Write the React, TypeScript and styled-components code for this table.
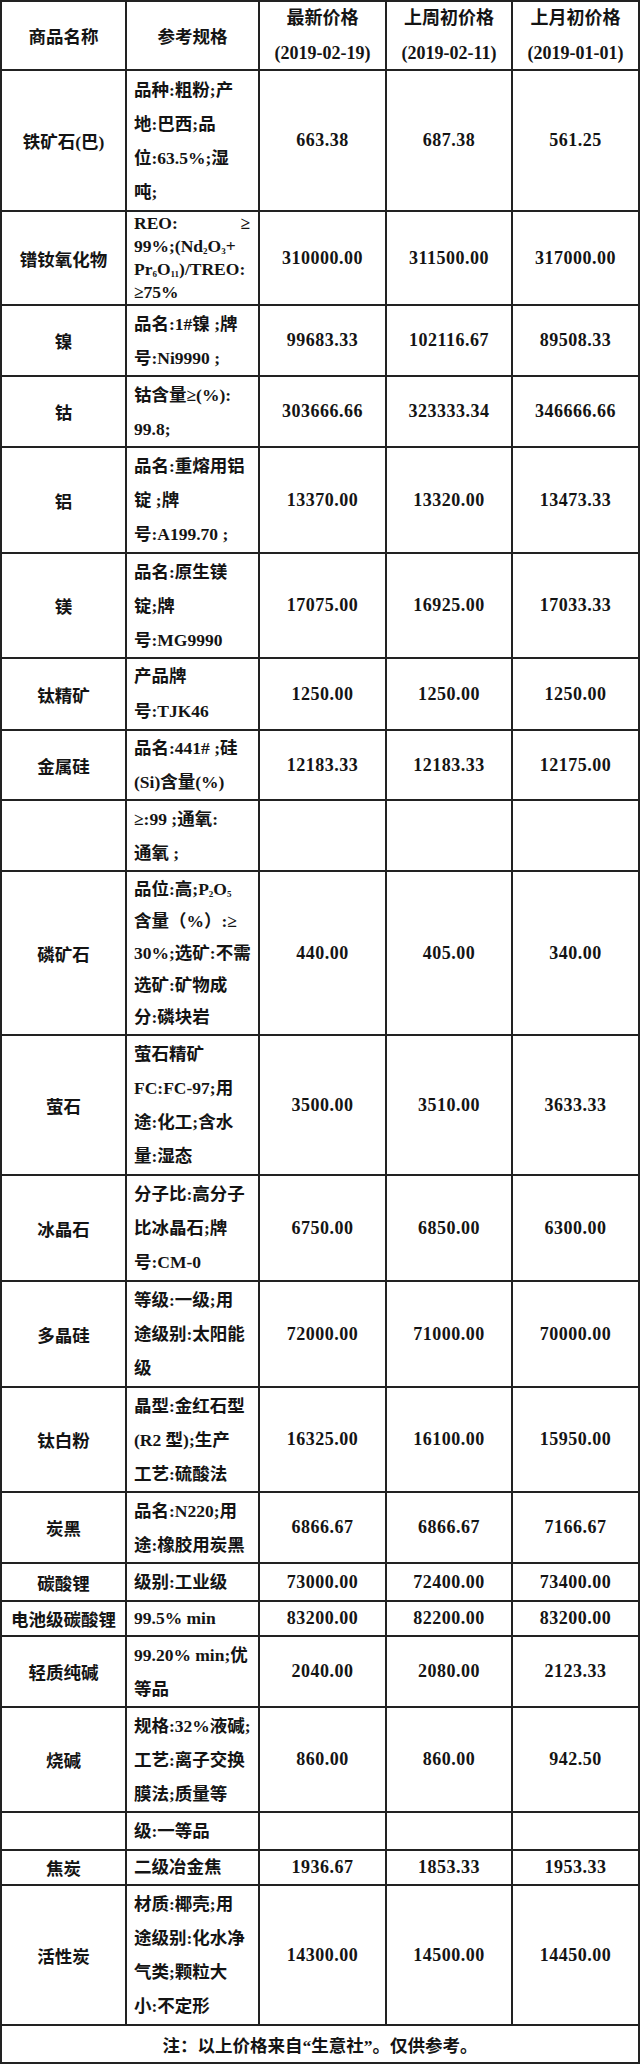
import React from "react";
import styled, { createGlobalStyle } from "styled-components";

const GlobalStyle = createGlobalStyle`
  html, body {
    margin: 0;
    padding: 0;
    background: #ffffff;
  }
  body {
    font-family: "Liberation Serif", "Noto Sans CJK SC", serif;
    color: #141414;
  }
`;

const Table = styled.div`
  width: 640px;
  box-sizing: border-box;
  border-top: 2px solid #222;
  border-left: 2px solid #222;
  font-size: 17.5px;
  font-weight: 600;
`;

const Row = styled.div<{ $height: number }>`
  display: grid;
  grid-template-columns: 125px 133px 127px 126px 127px;
  height: ${(props) => props.$height}px;
  box-sizing: border-box;
  border-bottom: 2px solid #222;
`;

const Cell = styled.div`
  display: flex;
  align-items: center;
  justify-content: center;
  border-right: 2px solid #222;
  white-space: nowrap;
  overflow: hidden;
`;

const HeadCell = styled(Cell)`
  flex-direction: column;
  line-height: 35px;
  font-size: 18px;
`;

const PriceCell = styled(Cell)`
  font-size: 18px;
  letter-spacing: 0.5px;
`;

const SpecCell = styled.div<{ $lineHeight: number }>`
  display: flex;
  flex-direction: column;
  justify-content: center;
  padding: 0 8px 0 7px;
  border-right: 2px solid #222;
  line-height: ${(props) => props.$lineHeight}px;
  white-space: nowrap;
  overflow: hidden;

  sub {
    font-size: 9px;
    line-height: 0;
    vertical-align: -2px;
  }
`;

const SpecLine = styled.div``;

const Spread = styled.span`
  display: flex;
  justify-content: space-between;
`;

const NoteRow = styled.div`
  display: flex;
  align-items: center;
  justify-content: center;
  height: 38px;
  box-sizing: border-box;
  border-right: 2px solid #222;
  border-bottom: 2px solid #222;
`;

interface IPriceRow {
  name: string;
  spec: React.ReactNode[];
  prices: string[];
  height: number;
}

const EMPTY = ["", "", ""];

const rows: IPriceRow[] = [
  {
    name: "铁矿石(巴)",
    spec: ["品种:粗粉;产", "地:巴西;品", "位:63.5%;湿", "吨;"],
    prices: ["663.38", "687.38", "561.25"],
    height: 141,
  },
  {
    name: "镨钕氧化物",
    spec: [
      <Spread key="a">
        <span>REO:</span>
        <span>≥</span>
      </Spread>,
      <span key="b">
        99%;(Nd<sub>2</sub>O<sub>3</sub>+
      </span>,
      <span key="c">
        Pr<sub>6</sub>O<sub>11</sub>)/TREO:
      </span>,
      "≥75%",
    ],
    prices: ["310000.00", "311500.00", "317000.00"],
    height: 94,
  },
  {
    name: "镍",
    spec: ["品名:1#镍 ;牌", "号:Ni9990 ;"],
    prices: ["99683.33", "102116.67", "89508.33"],
    height: 71,
  },
  {
    name: "钴",
    spec: ["钴含量≥(%):", "99.8;"],
    prices: ["303666.66", "323333.34", "346666.66"],
    height: 71,
  },
  {
    name: "铝",
    spec: ["品名:重熔用铝", "锭 ;牌", "号:A199.70 ;"],
    prices: ["13370.00", "13320.00", "13473.33"],
    height: 106,
  },
  {
    name: "镁",
    spec: ["品名:原生镁", "锭;牌", "号:MG9990"],
    prices: ["17075.00", "16925.00", "17033.33"],
    height: 105,
  },
  {
    name: "钛精矿",
    spec: ["产品牌", "号:TJK46"],
    prices: ["1250.00", "1250.00", "1250.00"],
    height: 72,
  },
  {
    name: "金属硅",
    spec: ["品名:441# ;硅", "(Si)含量(%)"],
    prices: ["12183.33", "12183.33", "12175.00"],
    height: 70,
  },
  {
    name: "",
    spec: ["≥:99 ;通氧:", "通氧 ;"],
    prices: EMPTY,
    height: 71,
  },
  {
    name: "磷矿石",
    spec: [
      <span key="a">
        品位:高;P<sub>2</sub>O<sub>5</sub>
      </span>,
      "含量（%）:≥",
      "30%;选矿:不需",
      "选矿:矿物成",
      "分:磷块岩",
    ],
    prices: ["440.00", "405.00", "340.00"],
    height: 164,
  },
  {
    name: "萤石",
    spec: ["萤石精矿", "FC:FC-97;用", "途:化工;含水", "量:湿态"],
    prices: ["3500.00", "3510.00", "3633.33"],
    height: 140,
  },
  {
    name: "冰晶石",
    spec: ["分子比:高分子", "比冰晶石;牌", "号:CM-0"],
    prices: ["6750.00", "6850.00", "6300.00"],
    height: 106,
  },
  {
    name: "多晶硅",
    spec: ["等级:一级;用", "途级别:太阳能", "级"],
    prices: ["72000.00", "71000.00", "70000.00"],
    height: 106,
  },
  {
    name: "钛白粉",
    spec: ["晶型:金红石型", "(R2 型);生产", "工艺:硫酸法"],
    prices: ["16325.00", "16100.00", "15950.00"],
    height: 105,
  },
  {
    name: "炭黑",
    spec: ["品名:N220;用", "途:橡胶用炭黑"],
    prices: ["6866.67", "6866.67", "7166.67"],
    height: 71,
  },
  {
    name: "碳酸锂",
    spec: ["级别:工业级"],
    prices: ["73000.00", "72400.00", "73400.00"],
    height: 38,
  },
  {
    name: "电池级碳酸锂",
    spec: ["99.5% min"],
    prices: ["83200.00", "82200.00", "83200.00"],
    height: 35,
  },
  {
    name: "轻质纯碱",
    spec: ["99.20% min;优", "等品"],
    prices: ["2040.00", "2080.00", "2123.33"],
    height: 71,
  },
  {
    name: "烧碱",
    spec: ["规格:32%液碱;", "工艺:离子交换", "膜法;质量等"],
    prices: ["860.00", "860.00", "942.50"],
    height: 105,
  },
  {
    name: "",
    spec: ["级:一等品"],
    prices: EMPTY,
    height: 38,
  },
  {
    name: "焦炭",
    spec: ["二级冶金焦"],
    prices: ["1936.67", "1853.33", "1953.33"],
    height: 35,
  },
  {
    name: "活性炭",
    spec: ["材质:椰壳;用", "途级别:化水净", "气类;颗粒大", "小:不定形"],
    prices: ["14300.00", "14500.00", "14450.00"],
    height: 140,
  },
];

export default function App() {
  return (
    <>
      <GlobalStyle />
      <Table>
        <Row $height={69}>
          <Cell>商品名称</Cell>
          <Cell>参考规格</Cell>
          <HeadCell>
            <span>最新价格</span>
            <span>(2019-02-19)</span>
          </HeadCell>
          <HeadCell>
            <span>上周初价格</span>
            <span>(2019-02-11)</span>
          </HeadCell>
          <HeadCell>
            <span>上月初价格</span>
            <span>(2019-01-01)</span>
          </HeadCell>
        </Row>
        {rows.map(({ name, spec, prices, height }, index) => (
          <Row key={index} $height={height}>
            <Cell>{name}</Cell>
            <SpecCell $lineHeight={Math.min(35, Math.floor((height - 2) / spec.length))}>
              {spec.map((line, i) => (
                <SpecLine key={i}>{line}</SpecLine>
              ))}
            </SpecCell>
            {prices.map((price, i) => (
              <PriceCell key={i}>{price}</PriceCell>
            ))}
          </Row>
        ))}
        <NoteRow>注：以上价格来自“生意社”。仅供参考。</NoteRow>
      </Table>
    </>
  );
}
